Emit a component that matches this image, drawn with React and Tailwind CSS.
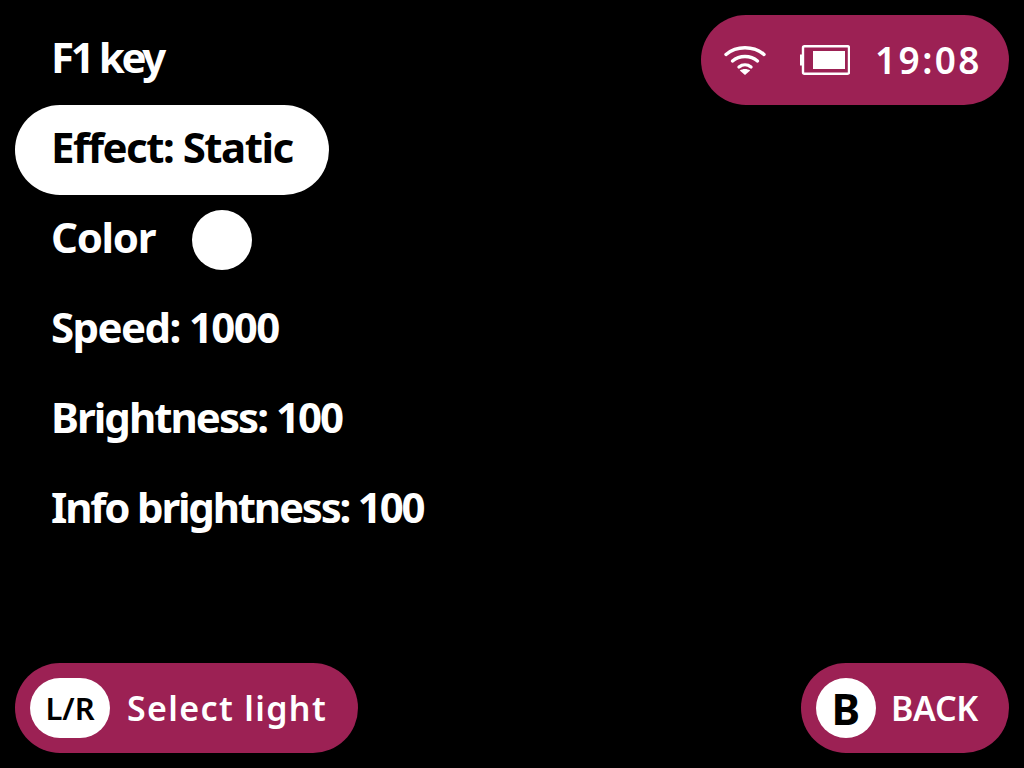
const font = "font-['Noto_Sans',sans-serif]";

function Row({ children, selected, track }) {
  return (
    <div className={`flex h-[90px] w-fit items-center rounded-[45px] pl-[36px] pr-[36px] text-[42px] font-bold leading-none ${track} ${selected ? "bg-white text-black" : "text-white"}`}>
      {children}
    </div>
  );
}

function Label({ children }) {
  return <span className="mb-[6px]">{children}</span>;
}

function Wifi() {
  return (
    <svg width="42" height="30" viewBox="0 0 42 30" fill="none" stroke="white" strokeWidth="3.4" strokeLinecap="round">
      <path d="M2 9.5C12.5 .5 29.5 .5 40 9.5" />
      <path d="M8.5 16C15.5 10 26.500 10 33.500 16" />
      <path d="M15 22C18.500 19.200 23.500 19.200 27 22" />
      <path d="M21 30L15.800 25.500C18.800 23.500 23.200 23.500 26.200 25.500Z" fill="white" stroke="none" />
    </svg>
  );
}

function Battery() {
  return (
    <svg width="50" height="30" viewBox="0 0 50 30">
      <rect x="3" y="1.200" width="46" height="27.600" rx="1.500" fill="none" stroke="white" strokeWidth="2.400" />
      <rect x="0" y="9.500" width="2.500" height="11" fill="white" />
      <rect x="13" y="6" width="32" height="18" fill="white" />
    </svg>
  );
}

export default function App() {
  return (
    <div className={`flex h-[768px] w-[1024px] flex-col justify-between overflow-hidden bg-black p-[15px] ${font}`}>
      <div className="flex items-start justify-between">
        <div className="flex flex-col">
          <Row track="tracking-[-3.4px]"><Label>F1 key</Label></Row>
          <Row selected track="tracking-[-1.5px]"><Label>Effect: Static</Label></Row>
          <Row track="tracking-[-1.3px]">
            <Label>Color</Label>
            <span className="ml-[37px] h-[60px] w-[60px] rounded-full bg-white" />
          </Row>
          <Row track="tracking-[-1.6px]"><Label>Speed: 1000</Label></Row>
          <Row track="tracking-[-1.97px]"><Label>Brightness: 100</Label></Row>
          <Row track="tracking-[-2.2px]"><Label>Info brightness: 100</Label></Row>
        </div>
        <div className="flex h-[90px] w-[308px] items-center rounded-[45px] bg-[#9c2154] pl-[23px] text-white">
          <Wifi />
          <span className="ml-[34px] flex"><Battery /></span>
          <span className="mb-[2px] ml-[25px] text-[37px] font-semibold leading-none tracking-[2.4px]">19:08</span>
        </div>
      </div>
      <div className="flex items-center justify-between">
        <div className="flex h-[90px] items-center rounded-[45px] bg-[#9c2154] pl-[15px] pr-[31px]">
          <span className="flex h-[60px] w-[80px] items-center justify-center rounded-[30px] bg-white text-[31px] font-semibold leading-none text-black">L/R</span>
          <span className="ml-[17px] text-[34px] font-semibold leading-none tracking-[1.35px] text-white">Select light</span>
        </div>
        <div className="flex h-[90px] items-center rounded-[45px] bg-[#9c2154] pl-[15px] pr-[31px]">
          <span className="flex h-[60px] w-[60px] items-center justify-center rounded-full bg-white text-[43px] font-bold leading-none text-black">B</span>
          <span className="ml-[15px] text-[34px] font-semibold leading-none tracking-[-0.3px] text-white">BACK</span>
        </div>
      </div>
    </div>
  );
}
